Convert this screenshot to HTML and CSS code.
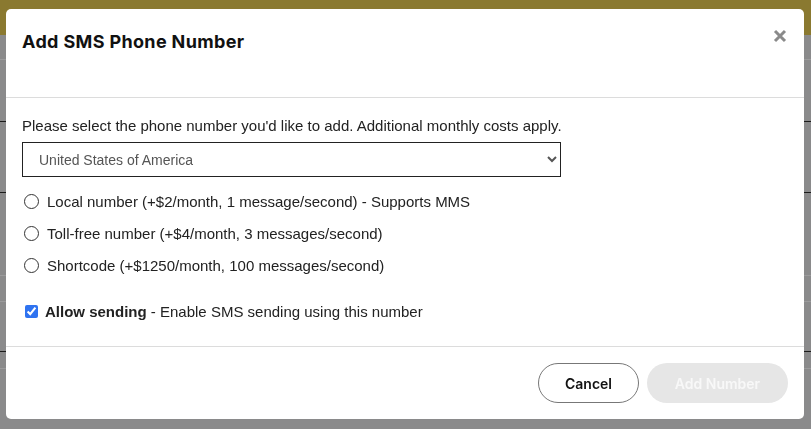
FILE: index.html
```html
<!DOCTYPE html>
<html>
<head>
    <meta charset="UTF-8">
    <meta name="viewport" content="width=device-width, initial-scale=1.0">
    <title>Add SMS Phone Number</title>
    <link rel="stylesheet" href="styles.css">
</head>
<body>
    <!-- page behind the modal, dimmed -->
    <div class="page">
        <div class="top-bar"></div>
        <div class="row light h25"></div>
        <div class="row dark h62"></div>
        <div class="row dark h71"></div>
        <div class="row light h83"></div>
        <div class="row light h26"></div>
        <div class="row dark h50"></div>
        <div class="row light h17"></div>
    </div>

    <!-- Add SMS Phone Number Modal -->
    <div class="modal">
        <div class="modal-content">
            <div class="modal-header">
                <h3>Add SMS Phone Number</h3>
                <svg class="close" width="14" height="14" viewBox="0 0 14 14">
                    <path d="M2 2 L12 12 M12 2 L2 12" stroke="#8a8a8a" stroke-width="3" stroke-linecap="butt"/>
                </svg>
            </div>
            <div class="modal-body">
                <p>Please select the phone number you'd like to add. Additional monthly costs apply.</p>
                <select class="country">
                    <option>United States of America</option>
                </select>
                <label class="option"><input type="radio" name="kind"><span>Local number (+$2/month, 1 message/second) - Supports MMS</span></label>
                <label class="option"><input type="radio" name="kind"><span>Toll-free number (+$4/month, 3 messages/second)</span></label>
                <label class="option"><input type="radio" name="kind"><span>Shortcode (+$1250/month, 100 messages/second)</span></label>
                <label class="option allow"><input type="checkbox" checked><span><b>Allow sending</b> - Enable SMS sending using this number</span></label>
            </div>
            <div class="modal-footer">
                <button class="btn-cancel">Cancel</button>
                <button class="btn-add" disabled>Add Number</button>
            </div>
        </div>
    </div>
</body>
</html>
```

FILE: styles.css
```css
* { box-sizing: border-box; margin: 0; padding: 0; }
body {
    font-family: "Liberation Sans", Arial, sans-serif;
    background-color: #8a8a8b;
    width: 811px;
    height: 429px;
    overflow: hidden;
}

/* Background page */
.page { display: flex; flex-direction: column; }
.top-bar { height: 35px; background-color: #8a7930; }
.row { border-bottom: 1px solid #9b9b9c; }
.row.dark { border-bottom-color: #1c1c1c; }
.h17 { height: 17px; }
.h25 { height: 25px; }
.h26 { height: 26px; }
.h50 { height: 50px; }
.h62 { height: 62px; }
.h71 { height: 71px; }
.h83 { height: 83px; }

/* Modal Styling */
.modal {
    position: fixed;
    left: 0;
    top: 0;
    width: 100%;
    height: 100%;
    padding: 9px 7px 0 6px;
}
.modal-content {
    background-color: white;
    border-radius: 5px;
    height: 410px;
    display: flex;
    flex-direction: column;
}
.modal-header {
    height: 89px;
    padding: 22px 16px 0 16px;
    border-bottom: 1px solid #dcdcdc;
    display: flex;
    justify-content: space-between;
    align-items: flex-start;
}
.modal-header h3 {
    font-family: Inter, "Noto Sans", sans-serif;
    font-size: 18px;
    font-weight: 700;
    color: #111;
    letter-spacing: 0.35px;
}
.close { margin: -2px 1px 0 0; }
.modal-body {
    flex: 1;
    padding: 19px 16px 0 16px;
    border-bottom: 1px solid #dcdcdc;
    font-size: 15px;
    color: #222;
}
.modal-body p { margin-bottom: 8px; }
.country {
    width: 539px;
    height: 35px;
    border: 1px solid #222;
    border-radius: 0;
    background-color: white;
    font-family: "Liberation Sans", Arial, sans-serif;
    font-size: 14px;
    color: #555;
    padding: 0 12px;
    margin-bottom: 8px;
}
.option {
    display: flex;
    align-items: center;
    gap: 8px;
    height: 32px;
}
.option input[type=radio] {
    appearance: none;
    width: 15px;
    height: 15px;
    margin-left: 2px;
    border: 1px solid #333;
    border-radius: 50%;
    background-color: white;
}
.option.allow { margin-top: 14px; gap: 7px; }
.option input[type=checkbox] {
    width: 13px;
    height: 13px;
    margin-left: 3px;
    accent-color: #2f73f0;
}
.modal-footer {
    height: 72px;
    padding: 16px 16px;
    display: flex;
    justify-content: flex-end;
    gap: 8px;
}
.modal-footer button {
    font-family: Inter, "Noto Sans", sans-serif;
    font-size: 14px;
    font-weight: 600;
    height: 40px;
    border-radius: 20px;
}
.btn-cancel {
    width: 101px;
    background-color: white;
    border: 1px solid #777;
    color: #111;
}
.btn-add {
    width: 141px;
    background-color: #e6e6e6;
    border: none;
    color: #f8f8f8;
}
```
